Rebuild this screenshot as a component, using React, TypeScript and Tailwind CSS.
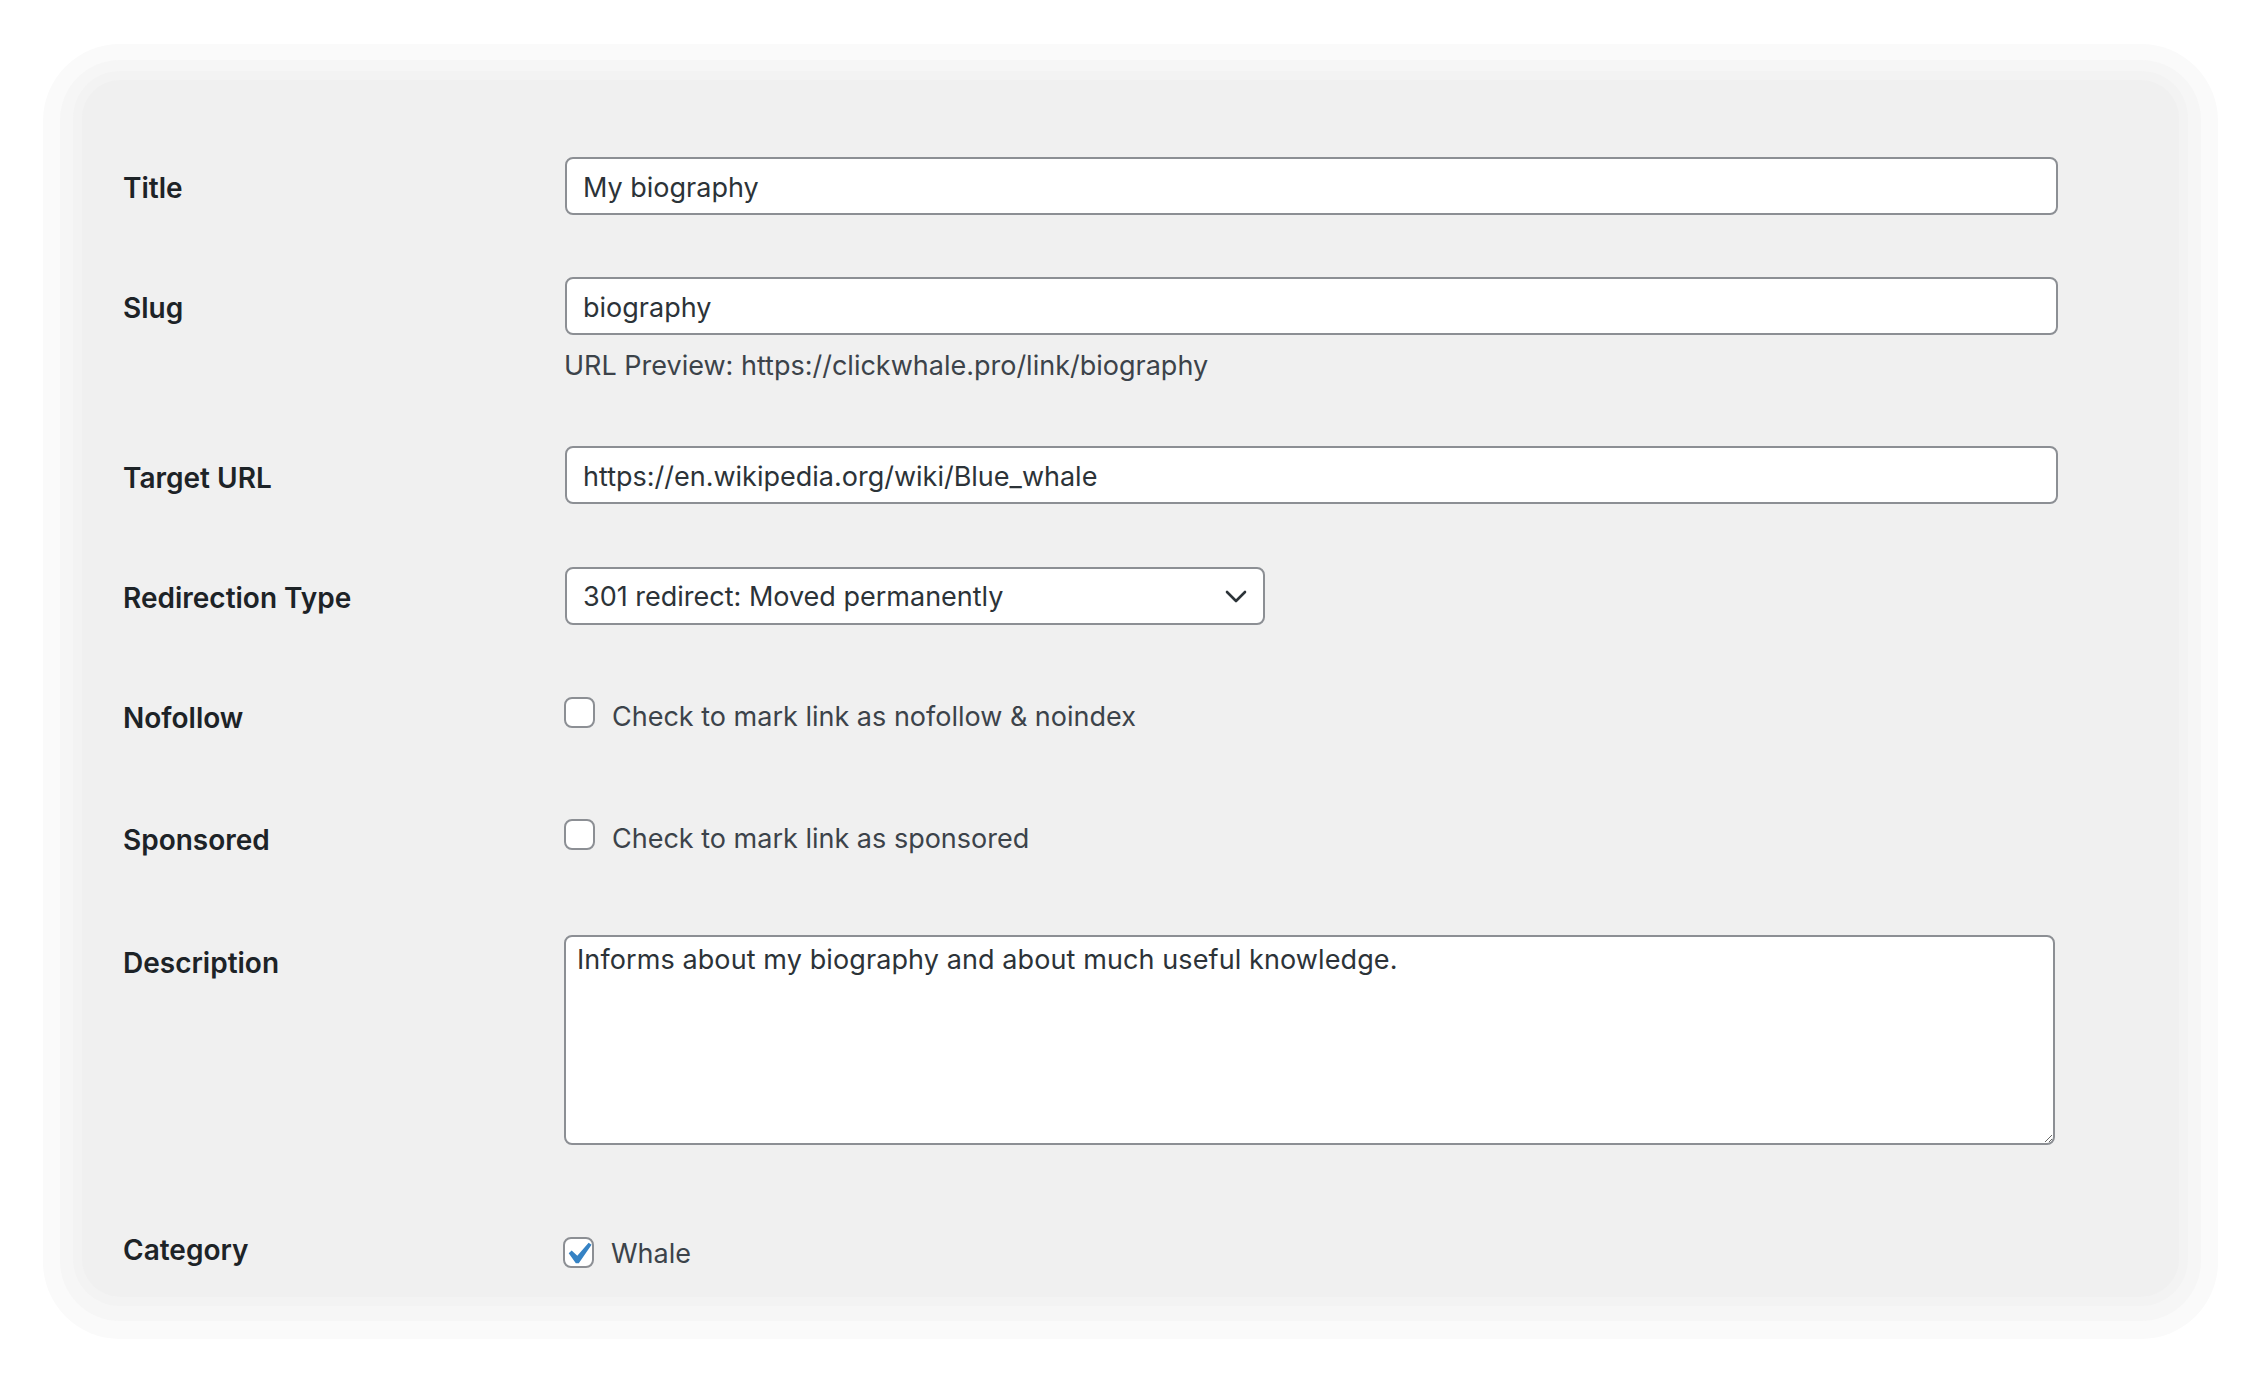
import React from "react";

const font = { fontFamily: "Inter, 'Liberation Sans', Arial, sans-serif" };

function Label({ children, pt }: { children: React.ReactNode; pt: string }) {
  return (
    <div className={`w-[442px] shrink-0 text-[28px] leading-[36px] font-semibold text-[#1d2327] ${pt}`}>
      {children}
    </div>
  );
}

function TextInput({ value }: { value: string }) {
  return (
    <input
      readOnly
      defaultValue={value}
      className="block w-[1493px] h-[58px] rounded-[8px] border-2 border-[#8c8f94] bg-white pl-[16px] pt-[2px] text-[27px] text-[#2c3338] outline-none"
      style={font}
    />
  );
}

function Checkbox({ checked = false, className = "" }: { checked?: boolean; className?: string }) {
  return (
    <div
      className={`relative w-[31px] h-[31px] shrink-0 rounded-[8px] border-2 border-[#8c8f94] bg-white ${className}`}
    >
      {checked && (
        <svg
          viewBox="0 0 20 20"
          className="absolute left-[-9px] top-[-7px] w-[44px] h-[44px]"
        >
          <path
            d="M14.83 4.89l1.34.94-5.81 8.38H9.02L5.78 9.67l1.34-1.25 2.57 2.4z"
            fill="#3582c4"
          />
        </svg>
      )}
    </div>
  );
}

export default function App() {
  return (
    <div className="w-[2261px] h-[1383px] bg-white pt-[80px] px-[82px]" style={font}>
      <div className="rounded-[38px] bg-[#f0f0f0] pl-[41px] pt-[47px] shadow-[0_0_0_9px_#f3f3f3,0_2px_0_22px_#f6f6f6,0_3px_0_39px_#fafafa]">
        {/* Title */}
        <div className="flex">
          <Label pt="pt-[43px]">Title</Label>
          <div className="pt-[30px] pb-[32px]">
            <TextInput value="My biography" />
          </div>
        </div>

        {/* Slug */}
        <div className="flex">
          <Label pt="pt-[43px]">Slug</Label>
          <div className="pt-[30px] pb-[30px]">
            <TextInput value="biography" />
            <div className="mt-[11px] -ml-[1px] text-[27px] leading-[40px] text-[#3c434a]">
              URL Preview: https://clickwhale.pro/link/biography
            </div>
          </div>
        </div>

        {/* Target URL */}
        <div className="flex">
          <Label pt="pt-[44px]">Target URL</Label>
          <div className="pt-[30px] pb-[32px]">
            <TextInput value="https://en.wikipedia.org/wiki/Blue_whale" />
          </div>
        </div>

        {/* Redirection Type */}
        <div className="flex">
          <Label pt="pt-[44px]">Redirection Type</Label>
          <div className="pt-[31px] pb-[31px]">
            <div className="flex items-center justify-between w-[700px] h-[58px] rounded-[8px] border-2 border-[#8c8f94] bg-white pl-[16px] pr-[16px]">
              <span className="pt-[2px] text-[27px] text-[#2c3338]">301 redirect: Moved permanently</span>
              <svg viewBox="0 0 22 13" className="w-[22px] h-[13px]">
                <polyline
                  points="2,2 11,11 20,2"
                  fill="none"
                  stroke="#2c3338"
                  strokeWidth="2.6"
                  strokeLinecap="round"
                  strokeLinejoin="round"
                />
              </svg>
            </div>
          </div>
        </div>

        {/* Nofollow */}
        <div className="flex">
          <Label pt="pt-[44px]">Nofollow</Label>
          <div className="flex items-start gap-[17px] pt-[41px] pb-[41px]">
            <Checkbox className="-ml-[1px]" />
            <span className="text-[27px] leading-[40px] text-[#3c434a]">
              Check to mark link as nofollow &amp; noindex
            </span>
          </div>
        </div>

        {/* Sponsored */}
        <div className="flex">
          <Label pt="pt-[44px]">Sponsored</Label>
          <div className="flex items-start gap-[17px] pt-[41px] pb-[41px]">
            <Checkbox className="-ml-[1px]" />
            <span className="text-[27px] leading-[40px] text-[#3c434a]">
              Check to mark link as sponsored
            </span>
          </div>
        </div>

        {/* Description */}
        <div className="flex">
          <Label pt="pt-[45px]">Description</Label>
          <div className="pt-[35px] pb-[30px]">
            <textarea
              readOnly
              defaultValue="Informs about my biography and about much useful knowledge."
              className="block -ml-[1px] w-[1491px] h-[210px] rounded-[8px] border-2 border-[#8c8f94] bg-white pl-[11px] pt-[3px] text-[27px] tracking-[0.1px] leading-[40px] text-[#2c3338] outline-none"
              style={font}
            />
          </div>
        </div>

        {/* Category */}
        <div className="flex">
          <Label pt="pt-[57px]">Category</Label>
          <div className="flex items-start gap-[17px] pt-[59px] pb-[23px]">
            <Checkbox checked className="-ml-[2px] mt-[3px]" />
            <span className="text-[27px] leading-[40px] text-[#3c434a]">Whale</span>
          </div>
        </div>
      </div>
    </div>
  );
}
